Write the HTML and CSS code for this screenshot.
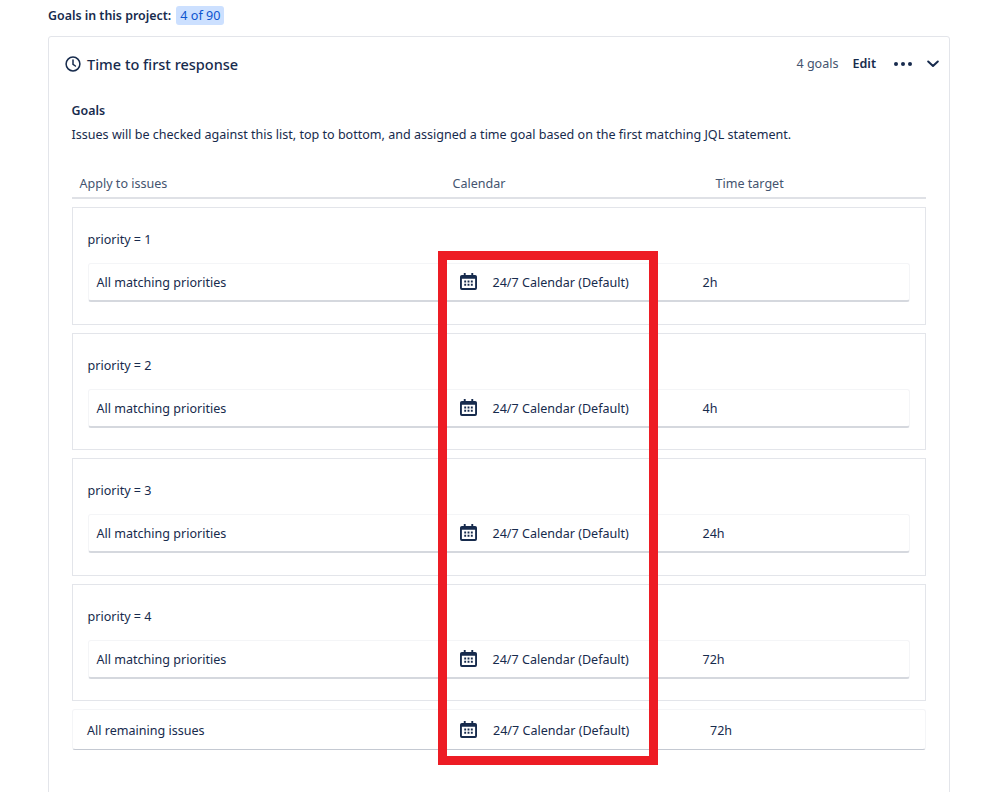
FILE: index.html
```html
<!DOCTYPE html>
<html lang="en">
<head>
<meta charset="utf-8">
<title>Goals</title>
<link rel="stylesheet" href="styles.css">
</head>
<body>
<svg class="defs" width="0" height="0" aria-hidden="true">
  <symbol id="cal" viewBox="0 0 18 18">
    <path fill="#172b4d" fill-rule="evenodd" d="M4 0h2v2h6V0h2v2h2a2 2 0 0 1 2 2v12a2 2 0 0 1-2 2H2a2 2 0 0 1-2-2V4a2 2 0 0 1 2-2h2V0zM2 6v10h14V6H2z"/>
    <path fill="#172b4d" d="M4.500 8h2v2h-2zM8 8h2v2H8zM11.500 8h2v2h-2zM4.500 11.500h2v2h-2zM8 11.500h2v2H8zM11.500 11.500h2v2h-2z"/>
  </symbol>
</svg>
<main class="page">
  <p class="summary"><strong>Goals in this project:</strong> <span class="badge">4 of 90</span></p>
  <section class="card">
    <header class="card-head">
      <svg class="clock" viewBox="0 0 16 16" width="16" height="16"><circle cx="8" cy="8" r="6.900" fill="none" stroke="#172b4d" stroke-width="1.500"/><path d="M8 4v4.300l2.400 1.700" fill="none" stroke="#172b4d" stroke-width="1.500" stroke-linecap="round"/></svg>
      <h2 class="card-title">Time to first response</h2>
      <span class="count">4 goals</span>
      <span class="edit">Edit</span>
      <svg class="dots" viewBox="0 0 18 4" width="18" height="4"><circle cx="2" cy="2" r="2" fill="#172b4d"/><circle cx="9" cy="2" r="2" fill="#172b4d"/><circle cx="16" cy="2" r="2" fill="#172b4d"/></svg>
      <svg class="chev" viewBox="0 0 12 8" width="12" height="8"><path d="M1.200 1.500 6 6l4.800-4.500" fill="none" stroke="#172b4d" stroke-width="2" stroke-linecap="round" stroke-linejoin="round"/></svg>
    </header>
    <div class="body">
      <h3 class="goals-title">Goals</h3>
      <p class="desc">Issues will be checked against this list, top to bottom, and assigned a time goal based on the first matching JQL statement.</p>
      <div class="thead">
        <span class="th-a">Apply to issues</span>
        <span class="th-b">Calendar</span>
        <span>Time target</span>
      </div>
      <div class="group">
        <div class="group-name">priority = 1</div>
        <div class="row">
          <span class="c-a">All matching priorities</span>
          <span class="c-b"><svg class="cal" width="17" height="17"><use href="#cal"/></svg>24/7 Calendar (Default)</span>
          <span>2h</span>
        </div>
      </div>
      <div class="group">
        <div class="group-name">priority = 2</div>
        <div class="row">
          <span class="c-a">All matching priorities</span>
          <span class="c-b"><svg class="cal" width="17" height="17"><use href="#cal"/></svg>24/7 Calendar (Default)</span>
          <span>4h</span>
        </div>
      </div>
      <div class="group">
        <div class="group-name">priority = 3</div>
        <div class="row">
          <span class="c-a">All matching priorities</span>
          <span class="c-b"><svg class="cal" width="17" height="17"><use href="#cal"/></svg>24/7 Calendar (Default)</span>
          <span>24h</span>
        </div>
      </div>
      <div class="group">
        <div class="group-name">priority = 4</div>
        <div class="row">
          <span class="c-a">All matching priorities</span>
          <span class="c-b"><svg class="cal" width="17" height="17"><use href="#cal"/></svg>24/7 Calendar (Default)</span>
          <span>72h</span>
        </div>
      </div>
      <div class="row row-last">
        <span class="c-a">All remaining issues</span>
        <span class="c-b"><svg class="cal" width="17" height="17"><use href="#cal"/></svg>24/7 Calendar (Default)</span>
        <span>72h</span>
      </div>
    </div>
  </section>
  <div class="highlight"></div>
</main>
</body>
</html>
```
FILE: styles.css
```css
html, body {
  margin: 0;
  height: 792px;
  overflow: hidden;
  background: #fff;
}
body {
  font-family: "Noto Sans", "Open Sans", sans-serif;
  font-size: 12.550px;
  color: #172b4d;
}
.defs { position: absolute; }
.page {
  position: relative;
  height: 792px;
  overflow: hidden;
  padding: 6px 49px 0 48px;
  box-sizing: border-box;
}
.summary {
  margin: 0 0 11px;
  height: 19px;
  line-height: 19px;
  font-size: 12.400px;
}
.summary strong { font-weight: 600; }
.badge {
  display: inline-block;
  background: #cce0ff;
  color: #0c55cf;
  border-radius: 3px;
  padding: 0 4px;
  margin-left: 2px;
  font-size: 12.600px;
}
.card {
  border: 1.500px solid #e3e5ea;
  border-radius: 3px;
  height: 900px;
  box-sizing: border-box;
}
.card-head {
  display: flex;
  align-items: center;
  height: 53px;
  padding: 0 10px 0 16px;
}
.clock { margin-right: 6px; }
.card-title {
  margin: 0;
  flex: 1;
  font-size: 14.500px;
  font-weight: 500;
}
.count { color: #44546f; margin-right: 14px; }
.edit { font-weight: 600; margin-right: 18px; }
.dots { margin-right: 15px; }
.body { padding: 12px 23px 0 22.500px; }
.goals-title {
  margin: 0;
  font-size: 12.400px;
  line-height: 18px;
  font-weight: 600;
}
.desc {
  margin: 6px 0 0;
  line-height: 18px;
}
.thead {
  display: flex;
  align-items: center;
  height: 28px;
  margin-top: 25px;
  padding-left: 8px;
  border-bottom: 2px solid #dfe1e6;
  color: #44546f;
}
.th-a { width: 373px; }
.th-b { width: 263px; }
.group {
  height: 117.500px;
  margin-top: 8px;
  box-sizing: border-box;
  border: 1px solid #e3e5ea;
  padding: 0 15px;
  overflow: hidden;
}
.group-name {
  height: 55px;
  line-height: 64px;
}
.row {
  display: flex;
  align-items: center;
  height: 39px;
  padding: 1px 0 0 8px;
  border-radius: 3px;
  border: 1px solid #f4f5f7;
  border-bottom: 2px solid #d5d8de;
  box-sizing: border-box;
}
.c-a { width: 363px; }
.c-b {
  display: flex;
  align-items: center;
  width: 243px;
}
.cal { margin: 0 16px 2px 0; flex: none; }
.row-last {
  height: 41px;
  margin-top: 8px;
  padding-left: 14.500px;
  border-bottom: 1px solid #c4c9d2;
}
.row-last .c-a { width: 373px; }
.row-last .c-b { width: 250px; }
.highlight {
  position: absolute;
  left: 438px;
  top: 251px;
  width: 220px;
  height: 514px;
  box-sizing: border-box;
  border: 9px solid #ed1c24;
}
```
